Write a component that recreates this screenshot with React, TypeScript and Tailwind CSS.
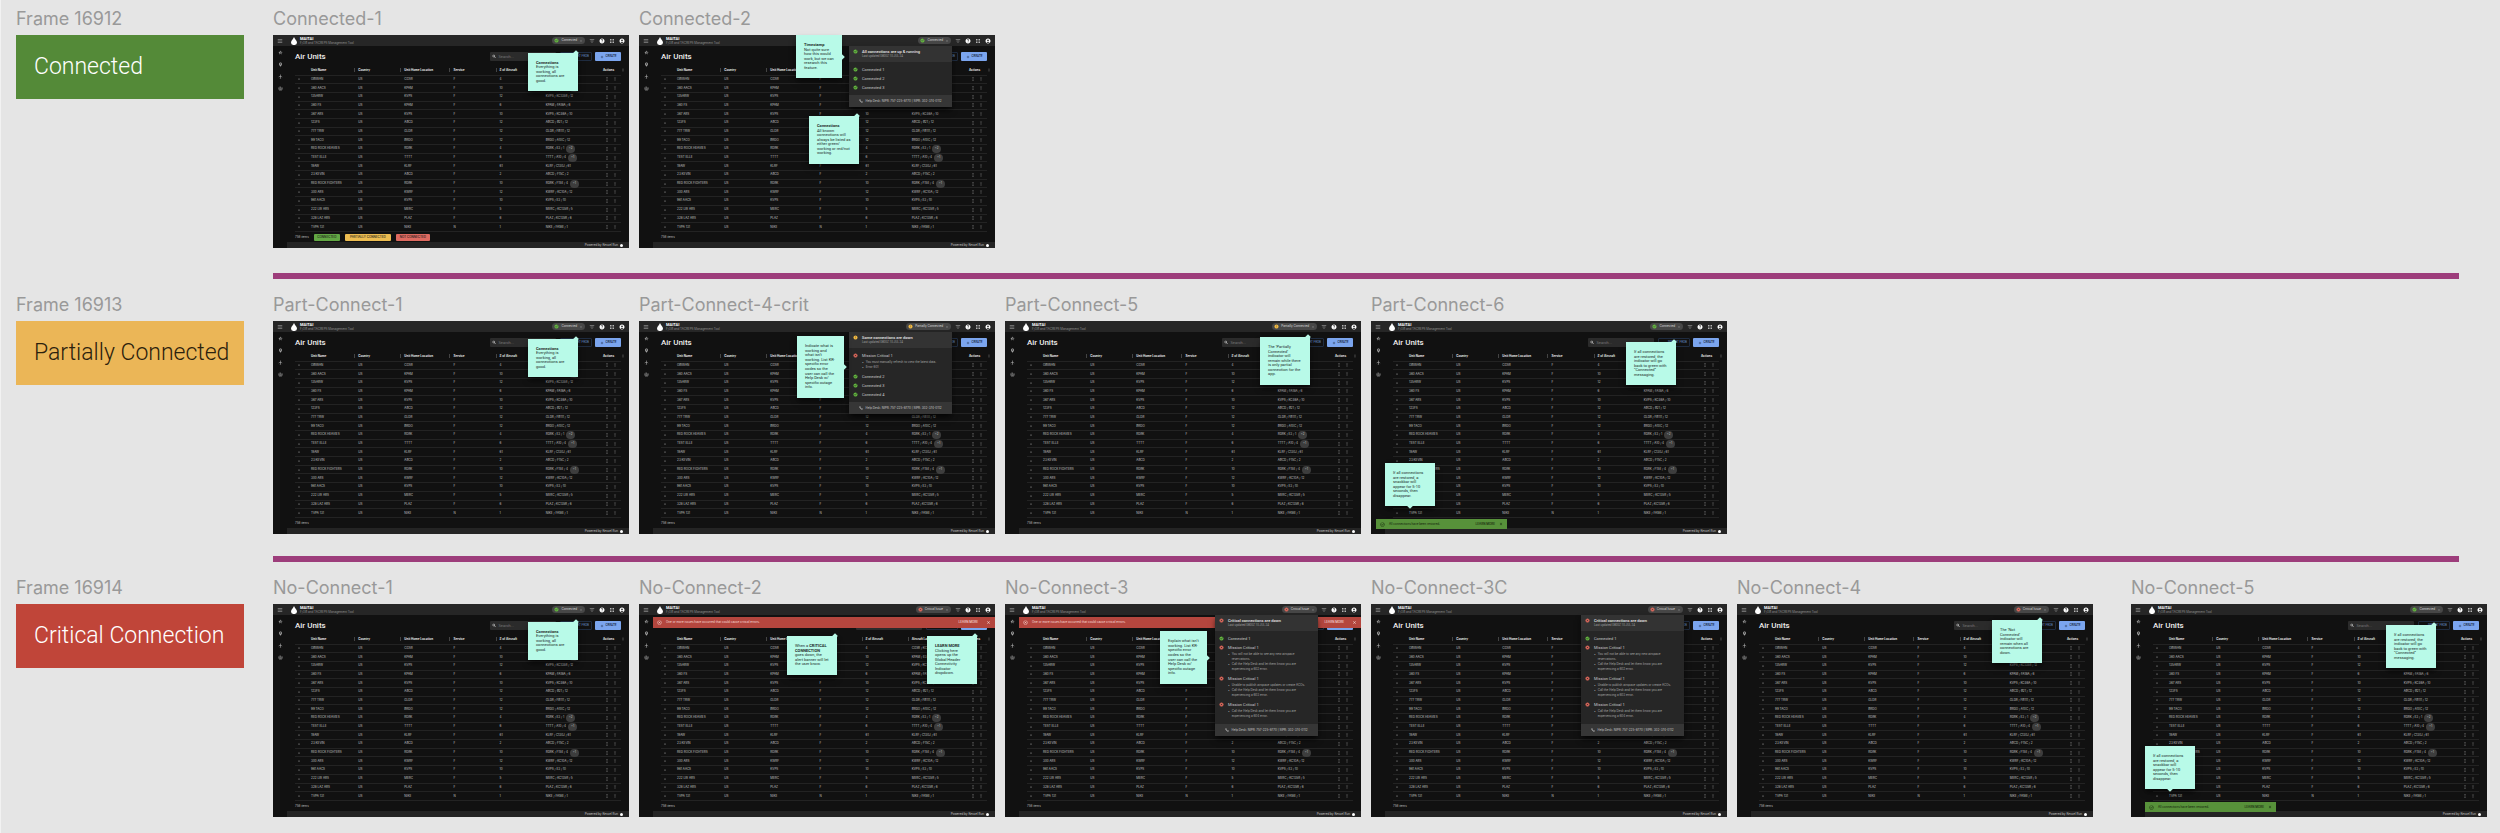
import type { ReactNode } from "react";
import {
  MdAccountCircle,
  MdAdd,
  MdApps,
  MdArrowDropDown,
  MdCancel,
  MdCheckCircle,
  MdClose,
  MdError,
  MdExpandMore,
  MdFilterList,
  MdFlight,
  MdHelp,
  MdHourglassEmpty,
  MdMenu,
  MdMoreVert,
  MdOutlineCancel,
  MdOutlineCheckCircle,
  MdOutlineDelete,
  MdPhone,
  MdPlace,
  MdSearch,
  MdStarHalf,
  MdTrackChanges,
} from "react-icons/md";

type Status = "ok" | "partial" | "critical";

interface MenuItem {
  status: Status;
  label: string;
  details?: string[][];
}

interface UnitRow {
  name: string;
  home: string;
  service: string;
  count: number;
  laydown: string;
  extra?: string;
}

const units: UnitRow[] = [
  { name: "OBIWAN", home: "CGSR", service: "F", count: 4, laydown: "CGSR / KC135 / 4" },
  { name: "360 AACS", home: "KPAM", service: "F", count: 10, laydown: "KPAM / E3 / 10", extra: "+1" },
  { name: "135ARW", home: "KVPS", service: "F", count: 12, laydown: "KVPS / KC135R / 12" },
  { name: "360 FS", home: "KPAM", service: "F", count: 6, laydown: "KPAM / FA18A / 6" },
  { name: "367 ARS", home: "KVPS", service: "F", count: 10, laydown: "KVPS / KC46A / 10" },
  { name: "123FS", home: "ABCD", service: "F", count: 12, laydown: "ABCD / B21 / 12" },
  { name: "777 TRW", home: "GLDR", service: "F", count: 12, laydown: "GLDR / FB111 / 12" },
  { name: "99 TACO", home: "BRDO", service: "F", count: 12, laydown: "BRDO / A10C / 12" },
  { name: "RED ROCK HEAVIES", home: "RDRK", service: "F", count: 4, laydown: "RDRK / E3 / 1", extra: "+2" },
  { name: "TEST ELLE", home: "TTTT", service: "F", count: 6, laydown: "TTTT / A10 / 4", extra: "+1" },
  { name: "19AW", home: "KLRF", service: "F", count: 61, laydown: "KLRF / C130J / 61" },
  { name: "23 KEVIN", home: "ABCD", service: "F", count: 2, laydown: "ABCD / F15C / 2" },
  { name: "RED ROCK FIGHTERS", home: "RDRK", service: "F", count: 10, laydown: "RDRK / F15E / 4", extra: "+1" },
  { name: "300 ARS", home: "KWRF", service: "F", count: 12, laydown: "KWRF / KC10A / 12" },
  { name: "961 AACS", home: "KVPS", service: "F", count: 10, laydown: "KVPS / E3 / 10" },
  { name: "222 LW ARS", home: "MERC", service: "F", count: 5, laydown: "MERC / KC135R / 5" },
  { name: "328 LAZ ARS", home: "PLAZ", service: "F", count: 6, laydown: "PLAZ / KC135R / 6" },
  { name: "TVPA 131", home: "NIKE", service: "N", count: 1, laydown: "NIKE / FA18E / 1" },
];

const columns = ["Country", "Unit Home Location", "Service", "# of Aircraft", "Aircraft Laydown"];

const statusConfig = {
  ok: { icon: MdCheckCircle, color: "text-[#63b83e]", label: "Connected" },
  partial: { icon: MdError, color: "text-[#f0b840]", label: "Partially Connected" },
  critical: { icon: MdCancel, color: "text-[#e0695c]", label: "Critical Issue" },
};

const StatusIcon = ({ status }: { status: Status }) => {
  const Icon = statusConfig[status].icon;
  return <Icon className={`size-[5px] shrink-0 rounded-full ${statusConfig[status].color}`} />;
};

const AppHeader = ({ status }: { status: Status }) => (
  <div className="flex h-[11px] items-center bg-[#262626] pr-1">
    <button aria-label="Open navigation" className="flex w-[14px] justify-center text-[#b5b5b5]">
      <MdMenu className="size-[6px]" />
    </button>
    <svg viewBox="0 0 12 16" className="mr-[3px] ml-1 h-2 w-[6px] fill-white">
      <path d="M6 0C6.8 3.6 12 7 12 11a5.6 5 0 0 1-6 5 5.600 5 0 0 1-6-5C0 7 5.200 3.600 6 0Z" />
    </svg>
    <div className="flex flex-col">
      <span className="text-[4px] leading-[4px] font-bold text-white">MAITAI</span>
      <span className="text-[3px] leading-[4px] text-[#8f8f8f] font-[Inter,sans-serif]">F/OB and TACREPS Management Tool</span>
    </div>
    <button className="mr-1 ml-auto flex h-[7px] items-center gap-[2px] rounded-full bg-[#474747] px-[2px] text-[3px] text-[#dddddd] font-[Inter,sans-serif]">
      <StatusIcon status={status} />
      {statusConfig[status].label}
      <MdArrowDropDown className="size-1" />
    </button>
    <div className="flex gap-1 text-white">
      <MdFilterList className="size-[6px] text-[#b5b5b5]" />
      <MdHelp className="size-[6px]" />
      <MdApps className="size-[6px] text-[#b5b5b5]" />
      <MdAccountCircle className="size-[6px]" />
    </div>
  </div>
);

const UnitsTable = () => (
  <table className="mt-[5px] h-[166px] w-full table-fixed border-collapse text-left font-[Inter,sans-serif] text-[3px] leading-[3px] whitespace-nowrap text-[#c4c4c4]">
    <thead>
      <tr className="h-[9px] border-b border-[#232323] font-bold text-[#e6e6e6]">
        <th className="w-4" aria-label="Expand" />
        <th className="w-[47px]">Unit Name</th>
        {columns.map((column) => (
          <th
            key={column}
            className={
              column === "Unit Home Location" ? "w-[49px]" : column === "Aircraft Laydown" ? "w-[57px]" : "w-[46px]"
            }
          >
            <span className="mr-[3px] -ml-1 inline-block h-1 w-px bg-[#444444] align-middle" />
            {column}
          </th>
        ))}
        <th className="w-[18px]">
          <span className="flex items-center justify-between">
            Actions
            <MdMoreVert className="-mr-1 size-1 shrink-0" />
          </span>
        </th>
      </tr>
    </thead>
    <tbody>
      {units.map((unit) => (
        <tr key={unit.name} className="border-b border-[#232323]">
          <td className="pl-[2px]">
            <MdExpandMore className="size-1" />
          </td>
          <td>{unit.name}</td>
          <td>US</td>
          <td>{unit.home}</td>
          <td>{unit.service}</td>
          <td>{unit.count}</td>
          <td>
            <span className="flex h-[3px] items-center gap-[2px]">
              {unit.laydown}
              {unit.extra && (
                <span className="flex h-2 w-[9px] items-center justify-center rounded-full bg-[#3d3d3d]">
                  {unit.extra}
                </span>
              )}
            </span>
          </td>
          <td>
            <span className="flex gap-1 pl-[2px] text-[#5c5c5c]">
              <MdHourglassEmpty className="size-1" />
              <MdOutlineDelete className="size-1" />
            </span>
          </td>
        </tr>
      ))}
    </tbody>
  </table>
);

interface ScreenProps {
  status?: Status;
  legend?: boolean;
  children?: ReactNode;
}

const Screen = ({ status = "ok", legend = false, children }: ScreenProps) => (
  <div className="relative flex flex-col bg-[#111111] font-[Roboto,sans-serif]">
    <AppHeader status={status} />
    <div className="flex">
      <nav className="flex w-[14px] shrink-0 flex-col items-center gap-[7px] pt-1 text-[#a3a3a3]">
        <MdStarHalf className="size-[5px]" />
        <MdPlace className="size-[5px]" />
        <MdFlight className="size-[5px]" />
        <MdTrackChanges className="size-[5px]" />
      </nav>
      <div className="min-w-0 flex-1">
        <div className="pt-[6px] pr-2 pl-2">
          <div className="flex h-[9px] items-center text-[3px]">
            <h2 className="mr-auto text-[8px] leading-[9px] font-medium text-[#ececec]">Air Units</h2>
            <label className="mr-1 flex h-[9px] w-[66px] items-center gap-[2px] rounded-[1px] bg-[#2b2b2b] px-[2px]">
              <MdSearch className="size-[5px] text-[#dddddd]" />
              <input
                aria-label="Search units"
                placeholder="Search..."
                className="w-full min-w-0 text-[4px] leading-[5px] placeholder:text-[#777777]"
              />
            </label>
            <button className="mr-[3px] h-[9px] w-8 rounded-[1px] border border-[#1f2c40] pr-[2px] text-right text-[#6487c2]">
              IMPORT FROB
            </button>
            <button className="flex h-[9px] w-[26px] items-center justify-center gap-[2px] rounded-[1px] bg-[#7ba5ee] font-medium text-[#16233a]">
              <MdAdd className="size-1" />
              CREATE
            </button>
          </div>
          <UnitsTable />
          <div className="flex h-[10px] items-center gap-[5px] font-[Inter,sans-serif] text-[3px] text-[#bdbdbd]">
            758 items
            {legend && (
              <div className="flex gap-[5px] font-medium text-[#1b1b1b]">
                <button className="h-[7px] w-[26px] rounded-[1px] bg-[#62a844]">CONNECTED</button>
                <button className="h-[7px] w-[46px] rounded-[1px] bg-[#edbd51]">PARTIALLY CONNECTED</button>
                <button className="h-[7px] w-[34px] rounded-[1px] bg-[#de6a60]">NOT CONNECTED</button>
              </div>
            )}
          </div>
        </div>
        <div className="flex h-[6px] items-center justify-end gap-[2px] bg-[#242424] pr-[6px] font-[Inter,sans-serif] text-[3px] leading-[3px] text-[#c4c4c4]">
          Powered by Kessel Run
          <span className="size-[3px] rounded-full bg-white" />
        </div>
      </div>
    </div>
    {children}
  </div>
);

const noteTips = {
  "up-right": "-top-[2px] right-0",
  right: "top-1/2 -right-[2px] -mt-[2px]",
  down: "-bottom-[2px] left-1/2 -ml-[2px]",
};

interface NoteProps {
  className: string;
  tip: keyof typeof noteTips;
  title?: string;
  lines: ReactNode[];
}

const Note = ({ className, tip, title, lines }: NoteProps) => (
  <div
    className={`absolute flex flex-col bg-[#b8fae8] py-2 pl-2 text-[4px] leading-[4px] whitespace-nowrap text-[#1d2b28] shadow-md shadow-black/50 ${className}`}
  >
    <span className={`absolute size-1 rotate-45 bg-[#b8fae8] ${noteTips[tip]}`} />
    {title && <strong className="flex-1 font-bold">{title}</strong>}
    {lines.map((line, i) => (
      <span key={i} className="flex-1">
        {line}
      </span>
    ))}
  </div>
);

interface ConnectionMenuProps {
  status: Status;
  title: string;
  items: MenuItem[];
}

const ConnectionMenu = ({ status, title, items }: ConnectionMenuProps) => (
  <div className="absolute top-[11px] right-[43px] w-[103px] bg-[#262626] text-[3px] leading-[5px] text-[#c9c9c9] shadow-md shadow-black/60">
    <div className="flex h-4 gap-1 bg-[#333333] px-1 pt-[3px]">
      <StatusIcon status={status} />
      <div className="flex flex-col">
        <span className="text-[4px] leading-[5px] font-medium text-[#e6e6e6]">{title}</span>
        <span className="leading-[4px] text-[#9c9c9c]">Last updated 0800Z 10 JUL 24</span>
      </div>
    </div>
    <ul className="flex flex-col gap-1 px-1 pt-[5px] pb-[5px]">
      {items.map((item, i) => (
        <li key={i} className="flex gap-1">
          <StatusIcon status={item.status} />
          <div>
            <p className="text-[4px] leading-[5px]">{item.label}</p>
            {item.details && (
              <ul className="mt-[2px] list-none font-[Inter,sans-serif] text-[#a8a8a8]">
                {item.details.map((detail) => (
                  <li key={detail[0]} className="flex gap-[2px]">
                    <span>•</span>
                    <span className="flex flex-col whitespace-nowrap">
                      {detail.map((line) => (
                        <span key={line}>{line}</span>
                      ))}
                    </span>
                  </li>
                ))}
              </ul>
            )}
          </div>
        </li>
      ))}
    </ul>
    <div className="flex h-3 items-center justify-center gap-[2px] bg-[#363636] font-[Inter,sans-serif] whitespace-nowrap">
      <MdPhone className="size-1 text-white" />
      Help Desk: NIPR: 757-225-8770 | SIPR: 302-374-0112
    </div>
  </div>
);

const AlertBanner = () => (
  <div className="absolute top-[13px] right-0 left-[14px] flex h-[11px] items-center gap-1 bg-[#b4463e] px-1 font-[Inter,sans-serif] text-[3px] text-[#f8dedb]">
    <MdOutlineCancel className="size-[5px]" />
    <span>One or more issues have occurred that could cause critical errors.</span>
    <button className="mr-1 ml-auto font-medium">LEARN MORE</button>
    <button aria-label="Dismiss alert">
      <MdClose className="size-[5px]" />
    </button>
  </div>
);

const Snackbar = ({ className }: { className: string }) => (
  <div
    className={`absolute bottom-[5px] flex h-[10px] w-[131px] items-center gap-1 bg-[#57913a] px-1 font-[Inter,sans-serif] text-[3px] text-[#12200b] ${className}`}
  >
    <MdOutlineCheckCircle className="size-[5px]" />
    <span>All connections have been restored.</span>
    <button className="ml-auto font-medium">LEARN MORE</button>
    <button aria-label="Dismiss message">
      <MdClose className="size-1" />
    </button>
  </div>
);

const goodNote = (
  <Note
    className="top-[18px] right-[51px] h-[38px] w-[50px]"
    tip="up-right"
    title="Connections"
    lines={["Everything is", "working, all", "connections are", "good."]}
  />
);

const restoredNotes = (
  <>
    <Note
      className="top-[21px] right-[51px] h-[43px] w-[50px]"
      tip="up-right"
      lines={[
        "If all connections",
        "are restored, the",
        "indicator will go",
        "back to green with",
        "“Connected”",
        "messaging.",
      ]}
    />
    <Note
      className="top-[142px] left-[14px] h-[43px] w-[50px]"
      tip="down"
      lines={["If all connections", "are restored, a", "snackbar will", "appear for 5-10", "seconds, then", "disappear."]}
    />
  </>
);

const criticalMenu = (
  <ConnectionMenu
    status="critical"
    title="Critical connections are down"
    items={[
      { status: "ok", label: "Connected 1" },
      {
        status: "critical",
        label: "Mission Critical 1",
        details: [
          ["You will not be able to see any new airspace", "reservations."],
          ["Call the Help Desk and let them know you are", "experiencing a 602 error."],
        ],
      },
      {
        status: "critical",
        label: "Mission Critical 1",
        details: [
          ["Unable to publish airspace updates or create ACOs."],
          ["Call the Help Desk and let them know you are", "experiencing a 603 error."],
        ],
      },
      {
        status: "critical",
        label: "Mission Critical 1",
        details: [["Call the Help Desk and let them know you are", "experiencing a 604 error."]],
      },
    ]}
  />
);

const Frame = ({ name, className = "", children }: { name: string; className?: string; children: ReactNode }) => (
  <section className={`min-w-0 ${className}`}>
    <h3 className="mb-[5px] text-[18px] leading-[22px] whitespace-nowrap text-[#999999]">{name}</h3>
    {children}
  </section>
);

const Swatch = ({ label, className }: { label: string; className: string }) => (
  <div
    className={`flex h-16 items-center px-[18px] font-[Roboto,sans-serif] text-[23px] font-light whitespace-nowrap ${className}`}
  >
    {label}
  </div>
);

const Divider = () => <hr className="col-span-6 col-start-2 mr-7 h-[6px] border-0 bg-[#9d3d7b]" />;

export default function App() {
  return (
    <main className="grid min-h-screen grid-cols-[247fr_repeat(5,356fr)_384fr] content-start gap-x-[10px] border-l border-[#f2f2f2] bg-[#e5e5e5] pt-2 pr-[13px] pb-4 pl-[15px] font-[Inter,sans-serif]">
      {/* Connected */}
      <Frame name="Frame 16912" className="mr-[19px]">
        <Swatch label="Connected" className="bg-[#548a38] text-white" />
      </Frame>
      <Frame name="Connected-1">
        <Screen legend>{goodNote}</Screen>
      </Frame>
      <Frame name="Connected-2">
        <Screen>
          <ConnectionMenu
            status="ok"
            title="All connections are up & running"
            items={[
              { status: "ok", label: "Connected 1" },
              { status: "ok", label: "Connected 2" },
              { status: "ok", label: "Connected 3" },
            ]}
          />
          <Note
            className="top-0 right-[153px] h-[43px] w-[46px]"
            tip="right"
            title="Timestamp"
            lines={["Not quite sure", "how this would", "work, but we can", "research this", "feature."]}
          />
          <Note
            className="top-[81px] right-[136px] h-12 w-[50px]"
            tip="up-right"
            title="Connections"
            lines={[
              "All known",
              "connections will",
              "always be listed as",
              "either green/",
              "working or red/not",
              "working.",
            ]}
          />
        </Screen>
      </Frame>
      <div className="col-span-full h-[25px]" />
      <Divider />
      <div className="col-span-full h-[15px]" />

      {/* Partially connected */}
      <Frame name="Frame 16913" className="mr-[19px]">
        <Swatch label="Partially Connected" className="bg-[#ebb657] text-[#2b210d]" />
      </Frame>
      <Frame name="Part-Connect-1">
        <Screen>{goodNote}</Screen>
      </Frame>
      <Frame name="Part-Connect-4-crit">
        <Screen status="partial">
          <ConnectionMenu
            status="partial"
            title="Some connections are down"
            items={[
              {
                status: "critical",
                label: "Mission Critical 1",
                details: [["You must manually refresh to view the latest data."], ["Error 601"]],
              },
              { status: "ok", label: "Connected 2" },
              { status: "ok", label: "Connected 3" },
              { status: "ok", label: "Connected 4" },
            ]}
          />
          <Note
            className="top-[15px] right-[151px] h-[62px] w-[47px]"
            tip="right"
            lines={[
              "Indicate what is",
              "working and",
              "what isn’t",
              "working. List KR-",
              "specific error",
              "codes so the",
              "user can call the",
              "Help Desk w/",
              "specific outage",
              "info.",
            ]}
          />
        </Screen>
      </Frame>
      <Frame name="Part-Connect-5">
        <Screen status="partial">
          <Note
            className="top-4 right-[51px] h-12 w-[50px]"
            tip="up-right"
            lines={[
              "The ‘Partially",
              "Connected’",
              "indicator will",
              "remain while there",
              "is only partial",
              "connection for the",
              "app.",
            ]}
          />
        </Screen>
      </Frame>
      <Frame name="Part-Connect-6">
        <Screen>
          {restoredNotes}
          <Snackbar className="left-[5px]" />
        </Screen>
      </Frame>
      <div className="col-span-full h-[22px]" />
      <Divider />
      <div className="col-span-full h-[15px]" />

      {/* Critical connection */}
      <Frame name="Frame 16914" className="mr-[19px]">
        <Swatch label="Critical Connection" className="bg-[#c04539] text-white" />
      </Frame>
      <Frame name="No-Connect-1">
        <Screen>{goodNote}</Screen>
      </Frame>
      <Frame name="No-Connect-2">
        <Screen status="critical">
          <AlertBanner />
          <Note
            className="top-8 right-[158px] h-[39px] w-[50px]"
            tip="up-right"
            lines={[
              <>
                When a <b>CRITICAL</b>
              </>,
              <b>CONNECTION</b>,
              "goes down, the",
              "alert banner will let",
              "the user know.",
            ]}
          />
          <Note
            className="top-8 right-[18px] h-12 w-[50px]"
            tip="up-right"
            title="LEARN MORE"
            lines={["Clicking here", "opens up the", "Global Header", "Connectivity", "Indicator", "dropdown."]}
          />
        </Screen>
      </Frame>
      <Frame name="No-Connect-3">
        <Screen status="critical">
          <AlertBanner />
          {criticalMenu}
          <Note
            className="top-[27px] right-[154px] h-[53px] w-[47px]"
            tip="right"
            lines={[
              "Explain what isn’t",
              "working. List KR-",
              "specific error",
              "codes so the",
              "user can call the",
              "Help Desk w/",
              "specific outage",
              "info.",
            ]}
          />
        </Screen>
      </Frame>
      <Frame name="No-Connect-3C">
        <Screen status="critical">{criticalMenu}</Screen>
      </Frame>
      <Frame name="No-Connect-4">
        <Screen status="critical">
          <Note
            className="top-4 right-[51px] h-[43px] w-[50px]"
            tip="up-right"
            lines={["The ‘Not", "Connected’", "indicator will", "remain when all", "connections are", "down."]}
          />
        </Screen>
      </Frame>
      <Frame name="No-Connect-5" className="ml-7">
        <Screen>
          {restoredNotes}
          <Snackbar className="left-[14px]" />
        </Screen>
      </Frame>
    </main>
  );
}
